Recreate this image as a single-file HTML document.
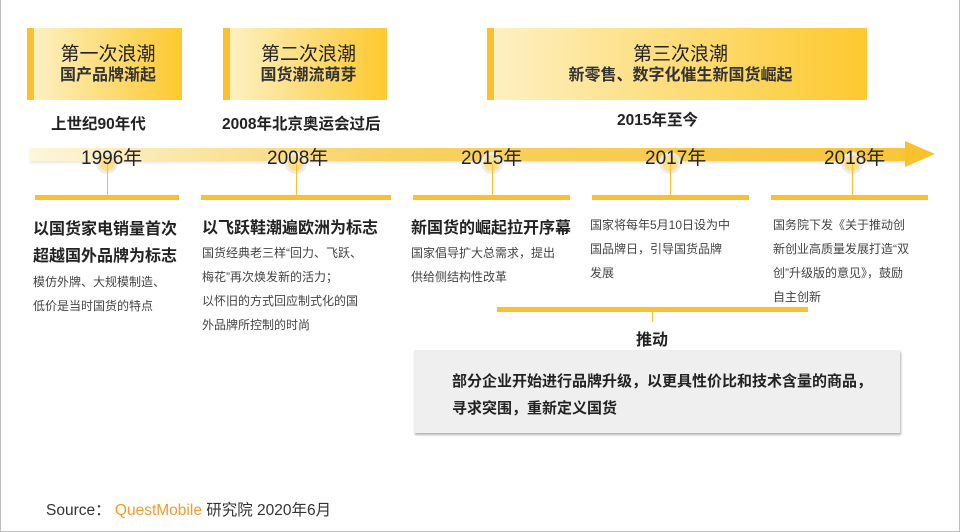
<!DOCTYPE html>
<html><head><meta charset="utf-8"><style>
*{margin:0;padding:0;box-sizing:border-box}
body{width:960px;height:532px;overflow:hidden;background:#fff;font-family:"Liberation Sans","Noto Sans CJK SC",sans-serif;color:#222}
.frame{position:absolute;left:0;top:0;width:960px;height:532px;border:1px solid #bdbdbd;border-top:none}
.a{position:absolute;white-space:nowrap}
.box{position:absolute;top:28px;height:72px;background:linear-gradient(90deg,#fdf0c2,#fdc92f);border-left:7px solid #fbc02d;text-align:center;color:#222}
.box .t{font-size:19px;line-height:23px;margin-top:15px}
.box .s{font-size:16px;line-height:20px;font-weight:bold;color:#333}
.lab{font-size:15.5px;font-weight:bold;color:#222}
.yr{font-size:19px;color:#222;top:143px}
.dot{position:absolute;width:16px;height:16px;border-radius:50%;background:#fde08a;box-shadow:0 0 0 3px #ececec;top:155px}
.vl{position:absolute;width:1px;background:#fbc02d;top:164px;height:32px}
.bar{position:absolute;top:195px;height:5px;background:#fbc02d}
.h{font-size:16px;font-weight:bold;color:#222}
.n{font-size:12px;color:#444;line-height:24px}
</style></head><body>
<div class="frame"></div>
<div class="box" style="left:27px;width:155px"><div class="t">第一次浪潮</div><div class="s">国产品牌渐起</div></div>
<div class="box" style="left:223px;width:164px"><div class="t">第二次浪潮</div><div class="s">国货潮流萌芽</div></div>
<div class="box" style="left:487px;width:380px"><div class="t">第三次浪潮</div><div class="s">新零售、数字化催生新国货崛起</div></div>
<div class="a lab" style="left:51px;top:112px">上世纪90年代</div>
<div class="a lab" style="left:222px;top:112px">2008年北京奥运会过后</div>
<div class="a lab" style="left:617px;top:108px">2015年至今</div>
<div class="a" style="left:30px;top:148px;width:880px;height:13px;background:linear-gradient(90deg,rgba(250,225,140,0.3),#f7d264 40%,#f8c53a);box-shadow:0 2px 3px rgba(0,0,0,0.1)"></div>
<svg class="a" style="left:905px;top:141px" width="32" height="28"><polygon points="0,0 30,13 0,26" fill="#f9c22d"/></svg>
<div class="dot" style="left:99px"></div><div class="dot" style="left:288px"></div><div class="dot" style="left:484px"></div><div class="dot" style="left:662px"></div><div class="dot" style="left:844px"></div>
<div class="a yr" style="left:81px">1996年</div>
<div class="a yr" style="left:267px">2008年</div>
<div class="a yr" style="left:461px">2015年</div>
<div class="a yr" style="left:645px">2017年</div>
<div class="a yr" style="left:824px">2018年</div>
<div class="vl" style="left:107px"></div><div class="vl" style="left:296px"></div><div class="vl" style="left:492px"></div><div class="vl" style="left:670px"></div><div class="vl" style="left:852px"></div>
<div class="bar" style="left:35px;width:144px"></div>
<div class="bar" style="left:201px;width:190px"></div>
<div class="bar" style="left:413px;width:157px"></div>
<div class="bar" style="left:592px;width:157px"></div>
<div class="bar" style="left:771px;width:157px"></div>
<div class="a" style="left:33px;top:216px"><div class="h" style="line-height:27px">以国货家电销量首次<br>超越国外品牌为标志</div><div class="n">模仿外牌、大规模制造、<br>低价是当时国货的特点</div></div>
<div class="a" style="left:202px;top:216px"><div class="h" style="line-height:25px">以飞跃鞋潮遍欧洲为标志</div><div class="n">国货经典老三样“回力、飞跃、<br>梅花”再次焕发新的活力；<br>以怀旧的方式回应制式化的国<br>外品牌所控制的时尚</div></div>
<div class="a" style="left:411px;top:216px"><div class="h" style="line-height:25px">新国货的崛起拉开序幕</div><div class="n">国家倡导扩大总需求，提出<br>供给侧结构性改革</div></div>
<div class="a n" style="left:590px;top:213px">国家将每年5月10日设为中<br>国品牌日，引导国货品牌<br>发展</div>
<div class="a n" style="left:773px;top:213px">国务院下发《关于推动创<br>新创业高质量发展打造“双<br>创”升级版的意见》，鼓励<br>自主创新</div>
<div class="a" style="left:497px;top:307px;width:311px;height:5px;background:#fbc02d"></div>
<div class="a" style="left:652px;top:312px;width:1px;height:10px;background:#fbc02d"></div>
<div class="a h" style="left:636px;top:326px">推动</div>
<div class="a" style="left:414px;top:350px;width:486px;height:83px;background:#efefef;box-shadow:1px 2px 2px rgba(0,0,0,0.3)"></div>
<div class="a" style="left:452px;top:368px;font-size:15px;line-height:27px;color:#222;font-weight:bold">部分企业开始进行品牌升级，以更具性价比和技术含量的商品，<br>寻求突围，重新定义国货</div>
<div class="a" style="left:46px;top:498px;font-size:15.5px;color:#333">Source： <span style="color:#f39a2b">QuestMobile</span> 研究院 2020年6月</div>
</body></html>
